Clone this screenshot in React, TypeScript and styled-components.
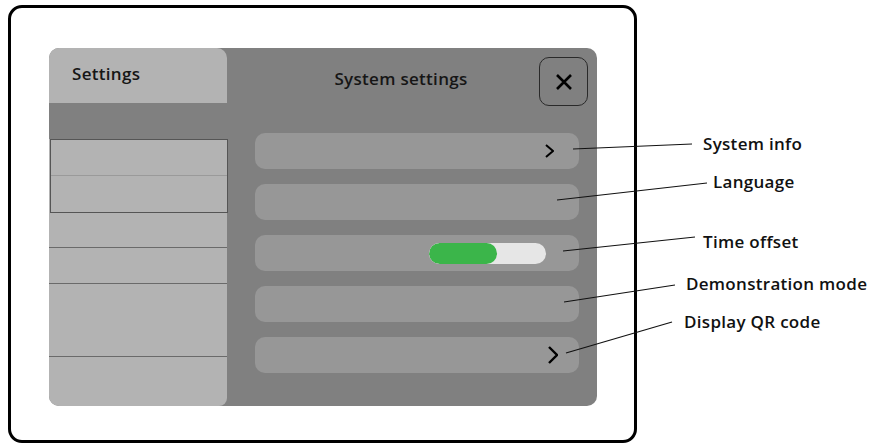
import styled, { createGlobalStyle } from 'styled-components';

const GlobalStyle = createGlobalStyle`
  html, body {
    margin: 0;
    padding: 0;
    background: #ffffff;
  }
  body {
    font-family: "Open Sans", "Liberation Sans", sans-serif;
    color: #111;
  }
  * {
    box-sizing: border-box;
  }
`;

const Page = styled.div`
  position: relative;
  width: 872px;
  height: 443px;
  overflow: hidden;
  padding: 5px 0 0 8px;
`;

const Device = styled.div`
  width: 629px;
  height: 438px;
  border: 3px solid #000;
  border-radius: 14px;
  padding: 40px 0 0 38px;
`;

const Panel = styled.div`
  width: 548px;
  height: 358px;
  display: grid;
  grid-template-columns: 178px 1fr;
  background: #808080;
  border-radius: 10px;
`;

const Sidebar = styled.div`
  display: flex;
  flex-direction: column;
`;

const Tab = styled.div`
  height: 55px;
  background: #b3b3b3;
  border-radius: 10px 10px 0 0;
  padding: 14px 0 0 23px;
  font-size: 17px;
  font-weight: 600;
  letter-spacing: 0.3px;
  color: #161616;
`;

const Band = styled.div`
  height: 36px;
`;

const MenuList = styled.div`
  flex: 1;
  display: flex;
  flex-direction: column;
  background: #b3b3b3;
  border-radius: 0 0 8px 10px;
`;

const ActiveGroup = styled.div`
  margin-left: 1px;
  margin-right: -1px;
  border: 1px solid #555;
  display: flex;
  flex-direction: column;
`;

const MenuItem = styled.div<{ $h: number; $line?: string }>`
  height: ${(p) => p.$h}px;
  flex-shrink: 0;
  border-bottom: ${(p) => (p.$line ? `1px solid ${p.$line}` : 'none')};
`;

const Main = styled.div`
  display: flex;
  flex-direction: column;
  padding: 9px 9px 0 28px;
`;

const Header = styled.div`
  display: flex;
  align-items: flex-start;
  height: 58px;
  margin-bottom: 18px;
`;

const Title = styled.div`
  flex: 1;
  text-align: center;
  padding: 10px 0 0 8px;
  font-size: 17px;
  font-weight: 600;
  letter-spacing: 0.3px;
  color: #161616;
`;

const CloseButton = styled.button`
  width: 49px;
  height: 49px;
  border: 1px solid #2a2a2a;
  border-radius: 10px;
  background: transparent;
  display: flex;
  align-items: center;
  justify-content: center;
  padding: 0;
`;

const Rows = styled.div`
  display: flex;
  flex-direction: column;
  gap: 15px;
  width: 324px;
`;

const Row = styled.div<{ $pr: number }>`
  height: 36px;
  border-radius: 10px;
  background: #979797;
  display: flex;
  align-items: center;
  justify-content: flex-end;
  padding-right: ${(p) => p.$pr}px;
`;

const Slider = styled.div`
  width: 117px;
  height: 21px;
  border-radius: 11px;
  background: #e6e6e6;
  overflow: hidden;
  display: flex;
`;

const SliderFill = styled.div`
  height: 100%;
  border-radius: 11px;
  background: #3bb54a;
`;

const Callouts = styled.svg`
  position: absolute;
  left: 0;
  top: 0;
  pointer-events: none;
`;

const Label = styled.div`
  position: absolute;
  font-size: 17px;
  font-weight: 600;
  letter-spacing: 0.3px;
  color: #111;
  line-height: 20px;
  white-space: nowrap;
  transform: translateY(-50%);
`;

const Chevron = ({ w, h, sw }: { w: number; h: number; sw: number }) => (
  <svg width={w + 2} height={h + 2} viewBox={`-1 -1 ${w + 2} ${h + 2}`}>
    <path d={`M0 0 L${w} ${h / 2} L0 ${h}`} fill="none" stroke="#000" strokeWidth={sw} />
  </svg>
);

const callouts = [
  { text: 'System info', x1: 573, y1: 149, x2: 692, y2: 144, lx: 703, ly: 144 },
  { text: 'Language', x1: 557, y1: 200, x2: 707, y2: 183, lx: 713, ly: 182 },
  { text: 'Time offset', x1: 563, y1: 251, x2: 695, y2: 237, lx: 703, ly: 242 },
  { text: 'Demonstration mode', x1: 564, y1: 302, x2: 675, y2: 285, lx: 686, ly: 284 },
  { text: 'Display QR code', x1: 566, y1: 353, x2: 672, y2: 322, lx: 684, ly: 322 },
];

const App = () => {
  return (
    <>
      <GlobalStyle />
      <Page>
        <Device>
          <Panel>
            <Sidebar>
              <Tab>Settings</Tab>
              <Band />
              <MenuList>
                <ActiveGroup>
                  <MenuItem $h={36} $line="#9a9a9a" />
                  <MenuItem $h={36} />
                </ActiveGroup>
                <MenuItem $h={35} $line="#6a6a6a" />
                <MenuItem $h={36} $line="#6a6a6a" />
                <MenuItem $h={73} $line="#6a6a6a" />
              </MenuList>
            </Sidebar>
            <Main>
              <Header>
                <Title>System settings</Title>
                <CloseButton>
                  <svg width="18" height="18" viewBox="0 0 18 18">
                    <path d="M2 2 L16 16 M16 2 L2 16" stroke="#000" strokeWidth="2.6" />
                  </svg>
                </CloseButton>
              </Header>
              <Rows>
                <Row $pr={25}>
                  <Chevron w={7} h={12} sw={2} />
                </Row>
                <Row $pr={25} />
                <Row $pr={33}>
                  <Slider>
                    <SliderFill style={{ width: '58%' }} />
                  </Slider>
                </Row>
                <Row $pr={25} />
                <Row $pr={21}>
                  <Chevron w={8} h={16} sw={2.4} />
                </Row>
              </Rows>
            </Main>
          </Panel>
        </Device>
        <Callouts width="872" height="443">
          {callouts.map((c) => (
            <line key={c.text} x1={c.x1} y1={c.y1} x2={c.x2} y2={c.y2} stroke="#111" strokeWidth="1.2" />
          ))}
        </Callouts>
        {callouts.map((c) => (
          <Label key={c.text} style={{ left: c.lx, top: c.ly }}>
            {c.text}
          </Label>
        ))}
      </Page>
    </>
  );
};

export default App;
